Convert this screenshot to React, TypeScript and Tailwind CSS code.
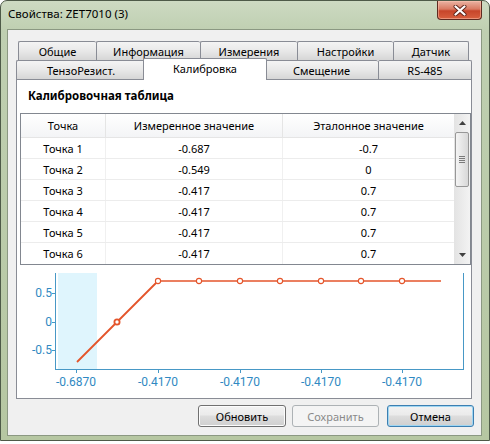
import React from "react";

const rowBack: [string, number][] = [
  ["Общие", 78],
  ["Информация", 104],
  ["Измерения", 97],
  ["Настройки", 96],
  ["Датчик", 76],
];

const rows: [string, string, string][] = [
  ["Точка 1", "-0.687", "-0.7"],
  ["Точка 2", "-0.549", "0"],
  ["Точка 3", "-0.417", "0.7"],
  ["Точка 4", "-0.417", "0.7"],
  ["Точка 5", "-0.417", "0.7"],
  ["Точка 6", "-0.417", "0.7"],
];

function CloseButton() {
  return (
    <div className="w-[45px] h-[19px] rounded-b-[4px] border border-t-0 border-[#5e2a20] bg-[linear-gradient(#eab3a3,#d97a62_45%,#c7452a_55%,#d8603f)] flex items-center justify-center shadow-[inset_0_0_0_1px_rgba(255,200,180,0.5)]">
      <svg width="14" height="11" viewBox="0 0 14 11">
        <path d="M2.5 1.5 L11.5 9.5 M11.5 1.5 L2.5 9.5" stroke="#5a2016" strokeWidth="4" strokeLinecap="round" />
        <path d="M2.5 1.5 L11.5 9.5 M11.5 1.5 L2.5 9.5" stroke="#ffffff" strokeWidth="2.3" strokeLinecap="round" />
      </svg>
    </div>
  );
}

function Chart() {
  const xs = [60, 100, 141, 182, 223, 263, 304, 344, 385, 424];
  const ys = [97, 57, 16, 16, 16, 16, 16, 16, 16, 16];
  const ticks = [59, 141, 223, 304, 385];
  const xLabels = ["-0.6870", "-0.4170", "-0.4170", "-0.4170", "-0.4170"];
  const axis = "#4798c6";
  const text = "#2f89c2";
  const line = "#e4552b";
  return (
    <svg width="453" height="132" viewBox="0 0 453 132" className="block">
      <rect x="41" y="8" width="39" height="96" fill="#dff5fd" />
      <line x1="38.5" y1="8" x2="38.5" y2="104.5" stroke={axis} />
      <line x1="446.5" y1="8" x2="446.5" y2="104.5" stroke={axis} />
      <line x1="38" y1="104.5" x2="447" y2="104.5" stroke={axis} />
      {[28, 57, 85].map((y) => (
        <line key={y} x1="35" y1={y + 0.5} x2="38" y2={y + 0.5} stroke={axis} />
      ))}
      {ticks.map((x) => (
        <line key={x} x1={x + 0.5} y1="104" x2={x + 0.5} y2="108" stroke={axis} />
      ))}
      <g fontFamily="Roboto, sans-serif" fontSize="12" fill={text}>
        <text x="35" y="32" textAnchor="end">0.5</text>
        <text x="35" y="61" textAnchor="end">0</text>
        <text x="35" y="89" textAnchor="end">-0.5</text>
        {ticks.map((x, i) => (
          <text key={i} x={x} y="121" textAnchor="middle">
            {xLabels[i]}
          </text>
        ))}
      </g>
      <polyline points={`${xs[0]},${ys[0]} ${xs[1]},${ys[1]} ${xs[2]},${ys[2]}`} fill="none" stroke={line} strokeWidth="1.8" />
      <polyline
        points={xs.slice(2).map((x, i) => `${x},${ys[i + 2]}`).join(" ")}
        fill="none"
        stroke={line}
        strokeWidth="1.3"
      />
      {xs.slice(1, 9).map((x, i) => (
        <circle key={x} cx={x} cy={ys[i + 1]} r="2.6" fill="#ffffff" stroke={line} strokeWidth={i === 0 ? 1.8 : 1.1} />
      ))}
    </svg>
  );
}

function Scrollbar() {
  return (
    <div className="w-[16px] h-full flex flex-col items-center bg-[linear-gradient(90deg,#e3e3e3,#f3f3f3)]">
      <div className="h-[18px] flex items-center justify-center">
        <svg width="7" height="4" viewBox="0 0 7 4">
          <path d="M0 4 L3.5 0 L7 4 Z" fill="#404040" />
        </svg>
      </div>
      <div className="w-[14px] h-[55px] rounded-[2px] border border-[#979797] bg-[linear-gradient(90deg,#f4f4f4,#e6e6e6_50%,#d8d8d8)] flex flex-col items-center justify-center gap-[1px]">
        <div className="w-[6px] h-px bg-[#7a7a7a]" />
        <div className="w-[6px] h-px bg-[#7a7a7a]" />
        <div className="w-[6px] h-px bg-[#7a7a7a]" />
        <div className="w-[6px] h-px bg-[#7a7a7a]" />
      </div>
      <div className="flex-1" />
      <div className="h-[18px] flex items-center justify-center">
        <svg width="7" height="4" viewBox="0 0 7 4">
          <path d="M0 0 L3.5 4 L7 0 Z" fill="#404040" />
        </svg>
      </div>
    </div>
  );
}

function Table() {
  return (
    <div className="ml-[3px] w-[451px] h-[152px] border border-[#828790] flex bg-white">
      <div className="flex-1 flex flex-col">
        <div className="h-[24px] flex border-b border-[#e5e5e5] bg-[linear-gradient(#ffffff,#f3f4f6)]">
          <div className="w-[85px] border-r border-[#e5e5e5] flex items-center justify-center">Точка</div>
          <div className="w-[177px] border-r border-[#e5e5e5] flex items-center justify-center">Измеренное значение</div>
          <div className="flex-1 flex items-center justify-center">Эталонное значение</div>
        </div>
        {rows.map((r, i) => (
          <div key={i} className={`h-[21px] flex ${i < rows.length - 1 ? "border-b border-[#ececec]" : ""}`}>
            <div className="w-[85px] border-r border-[#f0f0f0] flex items-center justify-center">{r[0]}</div>
            <div className="w-[177px] border-r border-[#f0f0f0] flex items-center justify-center">{r[1]}</div>
            <div className="flex-1 flex items-center justify-center">{r[2]}</div>
          </div>
        ))}
      </div>
      <Scrollbar />
    </div>
  );
}

export default function App() {
  return (
    <div className="w-[490px] h-[444px] bg-white font-['Noto_Sans',sans-serif] text-[11px] text-black leading-none overflow-hidden">
      <div className="w-[490px] h-[441px] rounded-t-[7px] border border-[#4e5a48] bg-[linear-gradient(#cddac2,#bfcfb1_30px,#b6c7a2)] flex flex-col">
        {/* title bar */}
        <div className="h-[28px] flex items-start justify-between pl-[7px] pr-[7px]">
          <div className="pt-[7px] text-[11.5px] text-black">Свойства: ZET7010 (3)</div>
          <CloseButton />
        </div>
        {/* client area */}
        <div className="ml-[6px] w-[475px] h-[407px] border border-[#8b9882] bg-[#f0f0f0] flex flex-col pt-[11px] pl-[8px]">
          {/* tab headers */}
          <div className="flex ml-[2px] h-[19px]">
            {rowBack.map(([label, w], i) => (
              <div
                key={label}
                style={{ width: w }}
                className={`h-[19px] border-t border-l ${i === rowBack.length - 1 ? "border-r" : ""} border-[#898c95] rounded-t-[2px] bg-[linear-gradient(#f4f4f4,#e8e8e8_50%,#d6d6d6)] flex items-center justify-center`}
              >
                {label}
              </div>
            ))}
          </div>
          <div className="flex h-[19px]">
            <div className="w-[129px] h-[19px] border-t border-l border-[#898c95] rounded-t-[2px] bg-[linear-gradient(#f4f4f4,#e8e8e8_50%,#d6d6d6)] flex items-center justify-center">
              ТензоРезист.
            </div>
            <div className="relative z-10 w-[124px] h-[22px] -mx-[2px] -mt-[2px] border-t border-l border-r border-[#898c95] rounded-t-[2px] bg-white flex items-center justify-center pb-[2px]">
              Калибровка
            </div>
            <div className="w-[113px] h-[19px] border-t border-[#898c95] rounded-t-[2px] bg-[linear-gradient(#f4f4f4,#e8e8e8_50%,#d6d6d6)] flex items-center justify-center">
              Смещение
            </div>
            <div className="w-[94px] h-[19px] border-t border-l border-r border-[#898c95] rounded-t-[2px] bg-[linear-gradient(#f4f4f4,#e8e8e8_50%,#d6d6d6)] flex items-center justify-center">
              RS-485
            </div>
          </div>
          {/* tab page */}
          <div className="w-[456px] h-[320px] border border-[#898c95] bg-white flex flex-col">
            <div className="h-[20px] mt-[6px] pl-[11px] flex items-center font-bold text-[11.5px]">Калибровочная таблица</div>
            <div className="mt-[7px]">
              <Table />
            </div>
            <Chart />
          </div>
          {/* dialog buttons */}
          <div className="mt-[6px] flex justify-end pr-[7px]">
            <div className="w-[88px] h-[22px] rounded-[3px] border border-[#707070] bg-[linear-gradient(#f2f2f2,#ebebeb_45%,#dddddd_50%,#cfcfcf)] flex items-center justify-center shadow-[inset_0_0_0_1px_#fcfcfc]">
              Обновить
            </div>
            <div className="ml-[6px] w-[87px] h-[22px] rounded-[3px] border border-[#adb2b5] bg-[#f4f4f4] text-[#8a8a8a] flex items-center justify-center">
              Сохранить
            </div>
            <div className="ml-[8px] w-[87px] h-[22px] rounded-[3px] border border-[#3c7fb1] bg-[linear-gradient(#f2f2f2,#ebebeb_45%,#dddddd_50%,#cfcfcf)] flex items-center justify-center shadow-[inset_0_0_0_1px_#9fd6f2]">
              Отмена
            </div>
          </div>
        </div>
      </div>
    </div>
  );
}
